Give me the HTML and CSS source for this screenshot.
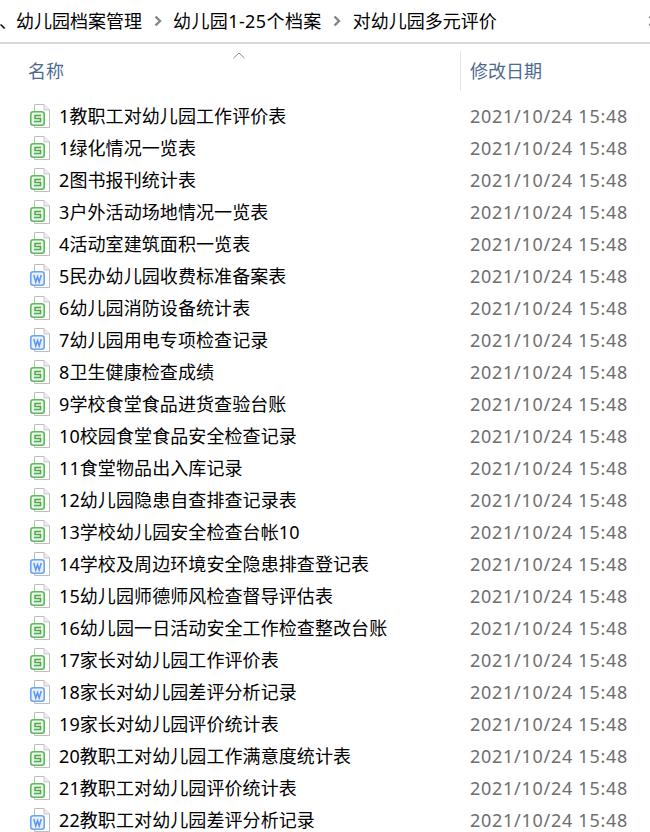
FILE: index.html
```html
<!DOCTYPE html>
<html lang="zh-CN">
<head>
<meta charset="utf-8">
<title>对幼儿园多元评价</title>
<link rel="stylesheet" href="styles.css">
</head>
<body>
<svg class="defs" width="0" height="0" aria-hidden="true">
  <symbol id="page" viewBox="0 0 20 24">
    <path d="M4.5 .5H14L19.500 6V23.500H4.500Z" fill="#fff" stroke="#bdbdbd"/>
    <path d="M14 .5V6H19.500" fill="#ececec" stroke="#c8c8c8"/>
  </symbol>
  <symbol id="sheet" viewBox="0 0 20 24">
    <use href="#page"/>
    <rect x=".8" y="7.800" width="13.400" height="13.400" rx="2.500" fill="#eaf7e6" stroke="#5cbb5c" stroke-width="1.600"/>
    <path d="M11 11.500H5V14.500H10.500V17.500H4" fill="none" stroke="#49ad4c" stroke-width="1.500"/>
  </symbol>
  <symbol id="doc" viewBox="0 0 20 24">
    <use href="#page"/>
    <rect x=".8" y="7.800" width="13.400" height="13.400" rx="2.500" fill="#e6f0fd" stroke="#6fa4ee" stroke-width="1.600"/>
    <path d="M3.800 11L5.800 18L7.500 12.500L9.200 18L11.200 11" fill="none" stroke="#5a94e8" stroke-width="1.400"/>
  </symbol>
</svg>

<nav class="crumbs">
  <span class="crumb-cut">、</span>
  <span>幼儿园档案管理</span>
  <svg class="chev" viewBox="0 0 8 12"><path d="M1.500 1.500L6 6L1.500 10.500" fill="none" stroke="#858585" stroke-width="2.400"/></svg>
  <span class="crumb-wide">幼儿园1-25个档案</span>
  <svg class="chev" viewBox="0 0 8 12"><path d="M1.500 1.500L6 6L1.500 10.500" fill="none" stroke="#858585" stroke-width="2.400"/></svg>
  <span>对幼儿园多元评价</span>
  <svg class="chev chev-end" viewBox="0 0 8 12"><path d="M1.500 1.500L6 6L1.500 10.500" fill="none" stroke="#858585" stroke-width="2.400"/></svg>
</nav>

<header class="columns">
  <div class="col-name">
    <svg class="sort" viewBox="0 0 12 7"><path d="M.5 6L6 1L11.500 6" fill="none" stroke="#8a8a8a" stroke-width="1"/></svg>
    名称
  </div>
  <div class="col-date">修改日期</div>
</header>

<ul class="files">
  <li class="file"><svg class="icon"><use href="#sheet"/></svg><span class="name">1教职工对幼儿园工作评价表</span><span class="date">2021/10/24 15:48</span></li>
  <li class="file"><svg class="icon"><use href="#sheet"/></svg><span class="name">1绿化情况一览表</span><span class="date">2021/10/24 15:48</span></li>
  <li class="file"><svg class="icon"><use href="#sheet"/></svg><span class="name">2图书报刊统计表</span><span class="date">2021/10/24 15:48</span></li>
  <li class="file"><svg class="icon"><use href="#sheet"/></svg><span class="name">3户外活动场地情况一览表</span><span class="date">2021/10/24 15:48</span></li>
  <li class="file"><svg class="icon"><use href="#sheet"/></svg><span class="name">4活动室建筑面积一览表</span><span class="date">2021/10/24 15:48</span></li>
  <li class="file"><svg class="icon"><use href="#doc"/></svg><span class="name">5民办幼儿园收费标准备案表</span><span class="date">2021/10/24 15:48</span></li>
  <li class="file"><svg class="icon"><use href="#sheet"/></svg><span class="name">6幼儿园消防设备统计表</span><span class="date">2021/10/24 15:48</span></li>
  <li class="file"><svg class="icon"><use href="#doc"/></svg><span class="name">7幼儿园用电专项检查记录</span><span class="date">2021/10/24 15:48</span></li>
  <li class="file"><svg class="icon"><use href="#sheet"/></svg><span class="name">8卫生健康检查成绩</span><span class="date">2021/10/24 15:48</span></li>
  <li class="file"><svg class="icon"><use href="#sheet"/></svg><span class="name">9学校食堂食品进货查验台账</span><span class="date">2021/10/24 15:48</span></li>
  <li class="file"><svg class="icon"><use href="#sheet"/></svg><span class="name">10校园食堂食品安全检查记录</span><span class="date">2021/10/24 15:48</span></li>
  <li class="file"><svg class="icon"><use href="#sheet"/></svg><span class="name">11食堂物品出入库记录</span><span class="date">2021/10/24 15:48</span></li>
  <li class="file"><svg class="icon"><use href="#sheet"/></svg><span class="name">12幼儿园隐患自查排查记录表</span><span class="date">2021/10/24 15:48</span></li>
  <li class="file"><svg class="icon"><use href="#sheet"/></svg><span class="name">13学校幼儿园安全检查台帐10</span><span class="date">2021/10/24 15:48</span></li>
  <li class="file"><svg class="icon"><use href="#doc"/></svg><span class="name">14学校及周边环境安全隐患排查登记表</span><span class="date">2021/10/24 15:48</span></li>
  <li class="file"><svg class="icon"><use href="#sheet"/></svg><span class="name">15幼儿园师德师风检查督导评估表</span><span class="date">2021/10/24 15:48</span></li>
  <li class="file"><svg class="icon"><use href="#sheet"/></svg><span class="name">16幼儿园一日活动安全工作检查整改台账</span><span class="date">2021/10/24 15:48</span></li>
  <li class="file"><svg class="icon"><use href="#sheet"/></svg><span class="name">17家长对幼儿园工作评价表</span><span class="date">2021/10/24 15:48</span></li>
  <li class="file"><svg class="icon"><use href="#doc"/></svg><span class="name">18家长对幼儿园差评分析记录</span><span class="date">2021/10/24 15:48</span></li>
  <li class="file"><svg class="icon"><use href="#sheet"/></svg><span class="name">19家长对幼儿园评价统计表</span><span class="date">2021/10/24 15:48</span></li>
  <li class="file"><svg class="icon"><use href="#sheet"/></svg><span class="name">20教职工对幼儿园工作满意度统计表</span><span class="date">2021/10/24 15:48</span></li>
  <li class="file"><svg class="icon"><use href="#sheet"/></svg><span class="name">21教职工对幼儿园评价统计表</span><span class="date">2021/10/24 15:48</span></li>
  <li class="file"><svg class="icon"><use href="#doc"/></svg><span class="name">22教职工对幼儿园差评分析记录</span><span class="date">2021/10/24 15:48</span></li>
</ul>
</body>
</html>
```

FILE: styles.css
```css
* {
  box-sizing: border-box;
}

html,
body {
  margin: 0;
  height: 832px;
  overflow: hidden;
  background: #fff;
}

body {
  font-family: "Noto Sans", "Noto Sans CJK SC", sans-serif;
  font-size: 18px;
  color: #000;
}

.defs {
  display: block;
  height: 0;
}

.crumbs {
  display: flex;
  align-items: center;
  height: 44px;
  padding-bottom: 3px;
  border-bottom: 2px solid #d9d9d9;
  white-space: nowrap;
}

.crumb-cut {
  width: 17px;
  margin-left: -1px;
  flex: none;
}

.crumb-wide {
  letter-spacing: .4px;
}

.chev {
  flex: none;
  width: 8px;
  height: 12px;
  margin: 2px 11.5px 0;
}

.chev-end {
  margin: 2px 0 0 151px;
}

.columns {
  display: flex;
  align-items: flex-start;
  height: 48px;
  padding-top: 7px;
  color: #4d6b8f;
}

.col-name {
  position: relative;
  flex: none;
  width: 461px;
  height: 40px;
  padding-left: 28px;
  line-height: 40px;
  border-right: 1px solid #e5e5e5;
}

.sort {
  position: absolute;
  left: 233px;
  top: 1px;
  width: 12px;
  height: 7px;
}

.col-date {
  padding-left: 9px;
  line-height: 40px;
}

.files {
  list-style: none;
  margin: 7px 0 0;
  padding: 0;
}

.file {
  display: flex;
  align-items: center;
  height: 32px;
}

.icon {
  flex: none;
  width: 20px;
  height: 24px;
  margin: 2px 0 0 30px;
}

.name {
  flex: none;
  width: 411px;
  margin-left: 9px;
  letter-spacing: .09px;
  white-space: nowrap;
}

.date {
  padding-top: 2px;
  color: #6e6e6e;
  letter-spacing: .72px;
  white-space: nowrap;
}
```
